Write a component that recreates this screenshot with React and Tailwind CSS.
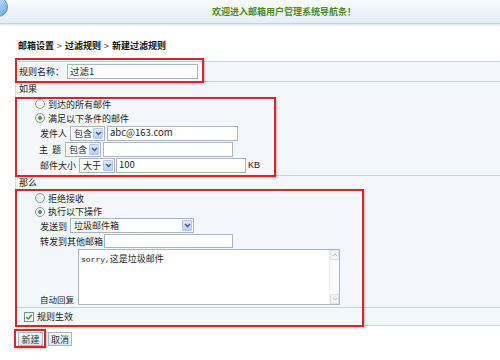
import React from "react";

const Chevron = () => (
  <svg width="7" height="5" viewBox="0 0 7 5" className="block">
    <path d="M1 1 L3.5 3.5 L6 1" fill="none" stroke="#3d5a8c" strokeWidth="1.5" />
  </svg>
);

function Select({ w, text, h = "h-[15px]" }) {
  return (
    <div className={`flex ${h} items-stretch border border-[#a7b4c2] bg-white`} style={{ width: w }}>
      <div className="flex flex-1 items-center pl-[3px] text-[9px] leading-none text-[#222]">{text}</div>
      <div className="m-[1px] flex w-[10px] items-center justify-center rounded-[1px] border border-[#b3c6ee] bg-linear-to-b from-[#dde7fd] to-[#bccff7]">
        <Chevron />
      </div>
    </div>
  );
}

function Input({ w, value, h = "h-[15px]" }) {
  return (
    <div
      className={`flex ${h} items-center border border-[#a9b5c1] bg-white pl-[2px] text-[9.5px] leading-none text-[#222]`}
      style={{ width: w }}
    >
      {value}
    </div>
  );
}

function Radio({ checked, label }) {
  return (
    <div className="flex items-center">
      <div className="ml-[19px] flex h-[10px] w-[10px] items-center justify-center rounded-full border border-[#8595a6] bg-linear-to-br from-[#e6e9ec] to-white">
        {checked && <div className="h-[4px] w-[4px] rounded-full bg-[#3f9a36]" />}
      </div>
      <span className="ml-[3px]">{label}</span>
    </div>
  );
}

function RedBox({ cls }) {
  return (
    <div
      className={`pointer-events-none absolute border-2 border-[#cc2b2b] shadow-[1px_1px_2px_rgba(0,0,0,0.25)] ${cls}`}
    />
  );
}

export default function App() {
  return (
    <div className="relative h-[360px] w-[500px] overflow-hidden bg-white font-['Noto_Sans_CJK_SC','Liberation_Sans',sans-serif] text-[9px] leading-none text-[#222]">
      {/* header */}
      <div className="relative flex h-[24px] items-center border-b border-[#c6d4e2] bg-linear-to-b from-[#f8fbfe] to-[#e4edf6] shadow-[0_1px_2px_rgba(150,170,195,0.35)]">
        <div className="absolute left-[-12px] top-[-3px] h-[20px] w-[20px] rounded-full border border-[#5c8fc4] bg-linear-to-br from-[#d8ecfd] to-[#6fa7df]" />
        <span className="ml-[212px] font-bold text-[#4a8a1e]">欢迎进入邮箱用户管理系统导航条！</span>
      </div>

      {/* breadcrumb */}
      <div className="flex h-[37px] items-center pl-[18px] pt-[5px] font-bold text-[#111]">
        <span>邮箱设置</span>
        <span className="mx-[3px] font-normal text-[#444]">&gt;</span>
        <span>过滤规则</span>
        <span className="mx-[3px] font-normal text-[#444]">&gt;</span>
        <span>新建过滤规则</span>
      </div>

      {/* form table */}
      <div className="ml-[15px] flex flex-col border-l border-[#d3dde8] bg-[#f3f7fb]">
        {/* name row */}
        <div className="flex h-[20px] items-center border-t border-[#c5d2df] pl-[3px]">
          <span className="w-[48px]">规则名称：</span>
          <Input w="131px" value="过滤1" />
        </div>

        {/* if row */}
        <div className="flex h-[94px] flex-col border-t border-[#c5d2df]">
          <div className="flex h-[13px] items-center pl-[3px]">如果</div>
          <div className="h-[2px]" />
          <div className="flex h-[14px] items-center">
            <Radio label="到达的所有邮件" />
          </div>
          <div className="flex h-[14px] items-center">
            <Radio checked label="满足以下条件的邮件" />
          </div>
          <div className="flex h-[16px] items-center pl-[24px]">
            <span className="w-[30px]">发件人</span>
            <Select w="35px" text="包含" />
            <div className="w-[2px]" />
            <Input w="131px" value="abc@163.com" />
          </div>
          <div className="flex h-[16px] items-center pl-[23px]">
            <span className="w-[26px]">主&nbsp;&nbsp;题</span>
            <Select w="36px" text="包含" />
            <div className="w-[2px]" />
            <Input w="130px" value="" />
          </div>
          <div className="flex h-[16px] items-center pl-[24px]">
            <span className="w-[39px]">邮件大小</span>
            <Select w="36px" text="大于" />
            <div className="w-[1px]" />
            <Input w="130px" value="100" />
            <span className="ml-[2px] font-['Liberation_Sans',sans-serif] text-[9px]">KB</span>
          </div>
        </div>

        {/* then row */}
        <div className="flex h-[132px] flex-col border-t border-[#c5d2df]">
          <div className="flex h-[13px] items-center pl-[3px]">那么</div>
          <div className="h-[2px]" />
          <div className="flex h-[14px] items-center">
            <Radio label="拒绝接收" />
          </div>
          <div className="flex h-[13px] items-center">
            <Radio checked label="执行以下操作" />
          </div>
          <div className="flex h-[15px] items-start pl-[24px]">
            <span className="mt-[4px] w-[30px]">发送到</span>
            <Select w="124px" h="h-[15px]" text="垃圾邮件箱" />
          </div>
          <div className="flex h-[16px] items-center pl-[24px]">
            <span className="w-[64px]">转发到其他邮箱</span>
            <Input w="129px" h="h-[14px]" value="" />
          </div>
          <div className="flex h-[56px] items-end pl-[24px]">
            <span className="mb-[2px] w-[38px] pr-[2px] text-[8.5px]">自动回复</span>
            <div className="relative flex h-[56px] w-[262px] border border-[#a9b5c1] bg-white">
              <div className="flex-1 pl-[2px] pt-[4px] text-[9px]">
                <span className="font-['Liberation_Mono',monospace] text-[8px]">sorry,</span>
                <span>这是垃圾邮件</span>
              </div>
              <div className="flex w-[10px] flex-col justify-between border-l border-[#eef0f2] bg-[#fbfbfb]">
                <div className="flex h-[10px] items-center justify-center border border-[#dfe3e7] bg-[#f2f4f6]">
                  <svg width="6" height="4" viewBox="0 0 6 4"><path d="M1 3 L3 1 L5 3" fill="none" stroke="#b7bec6" strokeWidth="1" /></svg>
                </div>
                <div className="flex h-[10px] items-center justify-center border border-[#dfe3e7] bg-[#f2f4f6]">
                  <svg width="6" height="4" viewBox="0 0 6 4"><path d="M1 1 L3 3 L5 1" fill="none" stroke="#b7bec6" strokeWidth="1" /></svg>
                </div>
              </div>
            </div>
          </div>
        </div>

        {/* effective row */}
        <div className="flex h-[19px] items-center border-y border-[#c5d2df] pl-[8px]">
          <div className="flex h-[10px] w-[10px] items-center justify-center border border-[#7f8fa0] bg-white">
            <svg width="8" height="8" viewBox="0 0 8 8"><path d="M1.2 4 L3.2 6 L6.8 1.8" fill="none" stroke="#2f9a2a" strokeWidth="1.5" /></svg>
          </div>
          <span className="ml-[3px]">规则生效</span>
        </div>
      </div>

      {/* buttons */}
      <div className="ml-[18px] mt-[6px] flex gap-[5px]">
        <div className="flex h-[14px] w-[25px] items-center justify-center border border-[#a8b6c4] bg-linear-to-b from-[#f4f7fa] to-[#dde5ed] text-[9px] text-[#333]">新建</div>
        <div className="flex h-[14px] w-[24px] items-center justify-center border border-[#a8b6c4] bg-linear-to-b from-[#f4f7fa] to-[#dde5ed] text-[9px] text-[#333]">取消</div>
      </div>

      {/* red annotation boxes */}
      <RedBox cls="left-[15px] top-[58px] h-[25px] w-[189px]" />
      <RedBox cls="left-[15px] top-[97px] h-[80px] w-[261px]" />
      <RedBox cls="left-[15px] top-[189px] h-[138px] w-[349px]" />
      <RedBox cls="left-[14px] top-[329px] h-[19px] w-[32px]" />
    </div>
  );
}
